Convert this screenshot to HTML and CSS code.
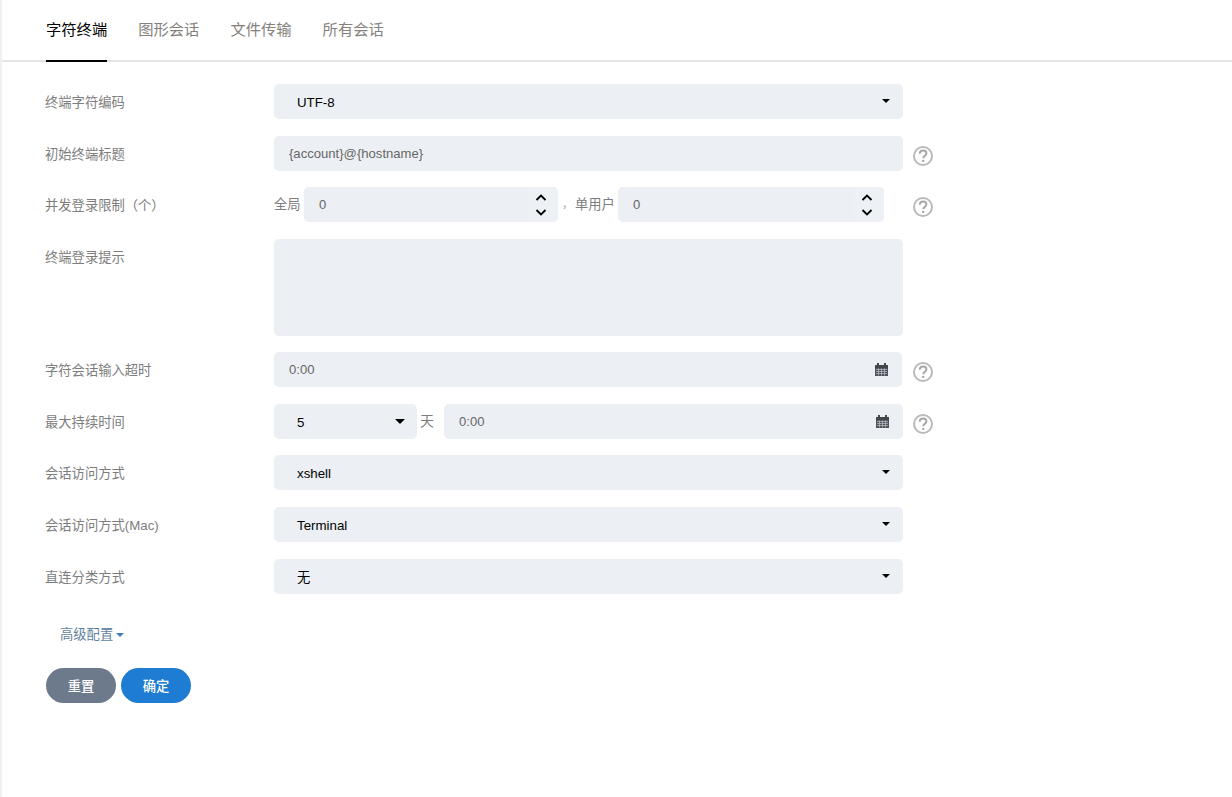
FILE: index.html
```html
<!DOCTYPE html>
<html lang="zh-CN">
<head>
<meta charset="utf-8">
<title>字符终端</title>
<link rel="stylesheet" href="styles.css">
</head>
<body>
<svg class="defs" width="0" height="0" aria-hidden="true">
  <symbol id="help" viewBox="0 0 20 20">
    <circle cx="10" cy="10" r="9" fill="none" stroke="#bababa" stroke-width="2"/>
    <path d="M6.7 7.7c.1-2 1.5-3.2 3.4-3.2 2 0 3.3 1.2 3.3 2.8 0 1.3-.8 2-1.7 2.6-.9.6-1.4 1.1-1.4 2.3" fill="none" stroke="#a8a8a8" stroke-width="2"/>
    <circle cx="10.2" cy="14.9" r="1.2" fill="#a8a8a8"/>
  </symbol>
  <symbol id="cal" viewBox="0 0 13 13">
    <path d="M0 2h2V0h2v2h5V0h2v2h2v3H0z" fill="#44464a"/>
    <path d="M0 5h13v8H0z" fill="#50545c"/>
    <path d="M1 6.5h11M1 8.5h11M1 10.5h11M3.5 5.5v7M6.5 5.5v7M9.5 5.5v7" stroke="#b9bec6" stroke-width=".7" fill="none"/>
  </symbol>
  <symbol id="spin" viewBox="0 0 14 26">
    <path d="M2.5 8 7 3.5 11.5 8M2.5 18 7 22.5 11.5 18" fill="none" stroke="#000" stroke-width="1.8"/>
  </symbol>
</svg>
<main class="page">
  <nav class="tabs">
    <a class="tab active">字符终端</a>
    <a class="tab">图形会话</a>
    <a class="tab">文件传输</a>
    <a class="tab">所有会话</a>
  </nav>
  <form class="form">
    <div class="row">
      <label class="label">终端字符编码</label>
      <div class="select full"><span>UTF-8</span></div>
    </div>
    <div class="row">
      <label class="label">初始终端标题</label>
      <input class="input full" value="{account}@{hostname}">
      <svg class="help"><use href="#help"/></svg>
    </div>
    <div class="row">
      <label class="label">并发登录限制（个）</label>
      <span class="text t-global">全局</span>
      <div class="spinner s-global"><input class="input" value="0"><svg class="spin"><use href="#spin"/></svg></div>
      <span class="text t-comma">，</span>
      <span class="text t-user">单用户</span>
      <div class="spinner s-user"><input class="input" value="0"><svg class="spin"><use href="#spin"/></svg></div>
      <svg class="help help-far"><use href="#help"/></svg>
    </div>
    <div class="row">
      <label class="label">终端登录提示</label>
      <textarea class="input full area"></textarea>
    </div>
    <div class="row">
      <label class="label">字符会话输入超时</label>
      <div class="date d-wide"><input class="input" value="0:00"><svg class="cal"><use href="#cal"/></svg></div>
      <svg class="help help-date"><use href="#help"/></svg>
    </div>
    <div class="row">
      <label class="label">最大持续时间</label>
      <div class="select days"><span>5</span></div>
      <span class="text t-day">天</span>
      <div class="date d-rest"><input class="input" value="0:00"><svg class="cal"><use href="#cal"/></svg></div>
      <svg class="help"><use href="#help"/></svg>
    </div>
    <div class="row">
      <label class="label">会话访问方式</label>
      <div class="select full"><span>xshell</span></div>
    </div>
    <div class="row">
      <label class="label">会话访问方式(Mac)</label>
      <div class="select full"><span>Terminal</span></div>
    </div>
    <div class="row">
      <label class="label">直连分类方式</label>
      <div class="select full"><span>无</span></div>
    </div>
    <a class="advanced">高级配置<i class="caret"></i></a>
    <div class="actions">
      <button type="button" class="btn reset">重置</button>
      <button type="button" class="btn ok">确定</button>
    </div>
  </form>
</main>
</body>
</html>
```
FILE: styles.css
```css
* { box-sizing: border-box; }
html, body { height: 100%; }
body {
  margin: 0;
  background: #fff;
  border-left: 2px solid #f0f0f0;
  font-family: "Liberation Sans", "Noto Sans CJK SC", sans-serif;
  font-size: 13.3px;
  color: #7d7d7d;
  overflow: hidden;
}
.defs { position: absolute; }
.tabs {
  display: flex;
  gap: 31px;
  height: 62px;
  padding-left: 44px;
  border-bottom: 2px solid #e5e5e5;
}
.tab {
  height: 62px;
  padding-top: 20px;
  font-size: 15.3px;
  line-height: 20px;
  color: #85817c;
}
.tab.active { color: #000; border-bottom: 2px solid #000; }
.form { padding: 22px 0 0 44px; }
.row {
  display: flex;
  align-items: flex-start;
  margin-bottom: 16.57px;
}
.label {
  flex: 0 0 229px;
  height: 35px;
  line-height: 37px;
  margin-left: -1px;
  color: #7d7d7d;
}
.input {
  display: block;
  width: 100%;
  height: 35px;
  border: 0;
  border-radius: 5px;
  background: #ecf0f4;
  padding: 0 15px;
  font: inherit;
  font-size: 13.1px;
  color: #666;
  outline: 0;
  resize: none;
}
.full { width: 629px; flex: none; }
.area { height: 97px; }
.select {
  position: relative;
  height: 35px;
  line-height: 38px;
  padding-left: 23px;
  border-radius: 5px;
  background: #ecf0f4;
  color: #000;
}
.select::after {
  content: "";
  position: absolute;
  right: 13px;
  top: 15px;
  border: 4px solid transparent;
  border-top-color: #000;
  border-bottom-width: 0;
}
.days { width: 143px; flex: none; }
.days::after { right: 12px; border-width: 5px 5px 0; }
.text { height: 35px; line-height: 35px; flex: none; }
.t-global { width: 30px; }
.t-comma { width: 17px; padding-left: 4px; font-size: 11px; color: #a5a5a5; }
.t-user { width: 43px; }
.t-day { width: 27px; padding-left: 3px; font-size: 14px; line-height: 34px; }
.spinner, .date { position: relative; flex: none; }
.spinner::before {
  content: "";
  position: absolute;
  top: 0;
  right: 0;
  width: 31px;
  height: 35px;
  border-radius: 0 5px 5px 0;
  background: #edf1f5;
}
.s-global { width: 254px; }
.s-user { width: 266px; }
.d-wide { width: 628px; }
.d-rest { width: 459px; }
.spin {
  position: absolute;
  top: 4px;
  right: 10px;
  width: 14px;
  height: 28px;
}
.cal {
  position: absolute;
  top: 11px;
  right: 14px;
  width: 13px;
  height: 13px;
}
.help {
  flex: none;
  width: 20px;
  height: 20px;
  margin: 10px 0 0 10px;
}
.help-far { margin-left: 29px; }
.help-date { margin-left: 11px; }
.advanced {
  display: block;
  margin: 31px 0 0 14px;
  height: 20px;
  line-height: 20px;
  color: #5f7f9e;
}
.caret {
  display: inline-block;
  margin-left: 3px;
  vertical-align: middle;
  border: 4.5px solid transparent;
  border-top-color: #3f7cb5;
  border-bottom-width: 0;
}
.actions { display: flex; gap: 5px; margin-top: 23px; }
.btn {
  width: 70px;
  height: 35px;
  border: 0;
  border-radius: 18px;
  padding: 0;
  font: inherit;
  font-weight: 500;
  color: #fff;
}
.reset { background: #6c7a8c; }
.ok { background: #1e7dd2; }
```
